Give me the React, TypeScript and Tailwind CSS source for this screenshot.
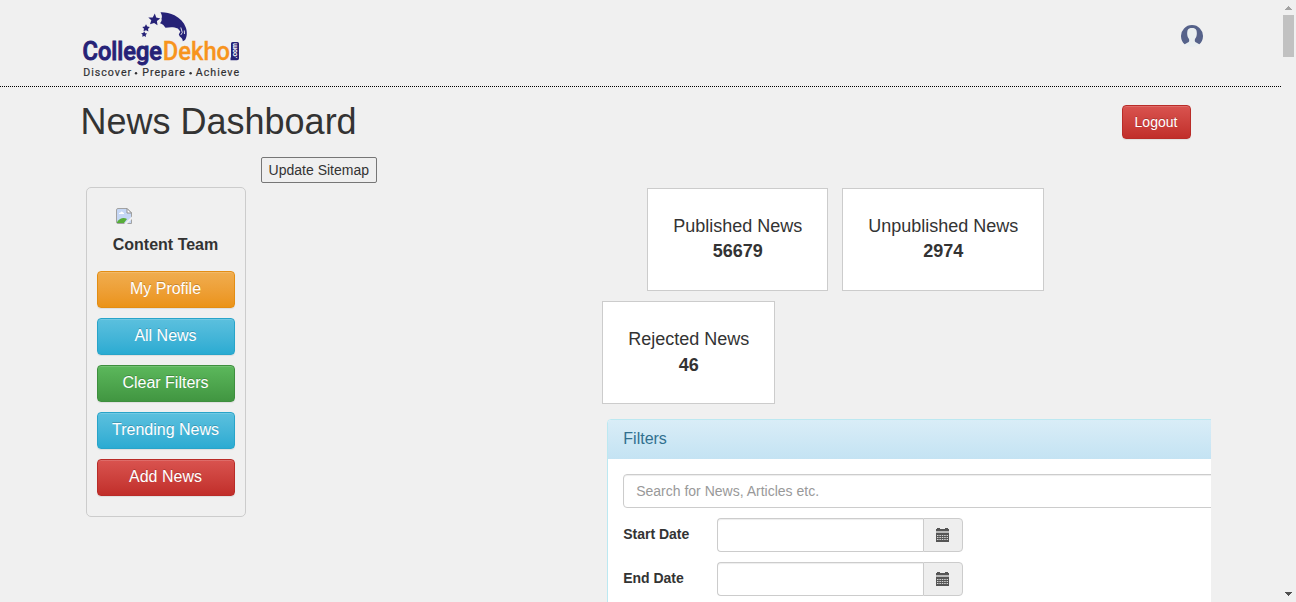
import React from 'react';

function Logo() {
  return (
    <svg width="160" height="72" viewBox="82 8 160 72" role="img" aria-label="CollegeDekho.com">
      <g fill="#262277">
        <path d="M160.500 12.300 C164 12 170 13 174.500 15.300 C180 18.200 184 22.500 185.800 27.500 C187.300 31.500 187.200 37 185 40 L182.800 41.300 C182.800 39 181.500 37.800 179.800 36.500 L178.800 34.500 L180.300 31.500 L177.800 28.500 C174 26.800 170 27 165.500 27.800 C164.300 26 162.800 24 160 23.300 C161.500 21.500 162 20.500 161.500 18.500 C162.500 16.500 161.500 14 160.500 12.300 Z" />
        <path d="M154.800 13.600 L156.200 17.500 L160.300 18.400 L156.900 21 L157.500 25.200 L154.100 22.900 L150 24.300 L151.300 20.300 L148.300 17.500 L152.700 17.400 Z" />
        <path d="M146 24.300 L147.300 26.600 L149.800 27 L148 28.900 L148.400 31.500 L146 30.300 L143.500 31.300 L144 28.800 L142.300 26.900 L144.800 26.600 Z" />
        <path d="M144.200 31.300 L145.200 33.300 L147.100 33.600 L145.700 35.100 L146 37 L144.200 36.100 L142.200 36.800 L142.600 34.800 L141.100 33.300 L143.200 33 Z" />
      </g>
      <path d="M180.800 27.500 L182.300 32.500 L180.800 35 M184.300 30.500 L184.500 34" stroke="#f0f0f0" strokeWidth="0.900" fill="none" />
      <text x="82.500" y="59.800" fontFamily="Roboto, sans-serif" fontWeight="500" fontSize="25.500" fill="#262277" stroke="#262277" strokeWidth="0.900" textLength="79.500" lengthAdjust="spacingAndGlyphs">College</text>
      <text x="162.800" y="59.800" fontFamily="Roboto, sans-serif" fontWeight="500" fontSize="25.500" fill="#f7941d" stroke="#f7941d" strokeWidth="0.300" textLength="67.300" lengthAdjust="spacingAndGlyphs">Dekho</text>
      <path d="M232.500 42 H237.500 Q239 42 239 43.500 V58.500 Q239 60.300 237 60.300 H230.500 V57.500 H231 V43.500 Q231 42 232.500 42 Z" fill="#262277" />
      <text transform="translate(237.300 58.500) rotate(-90)" fontFamily="Roboto, sans-serif" fontWeight="700" fontSize="7.500" fill="#fff" textLength="15.500" lengthAdjust="spacingAndGlyphs">.com</text>
      <g fontFamily="Roboto, sans-serif" fontWeight="400" fontSize="10.600" fill="#303033" stroke="#303033" strokeWidth="0.200">
        <text x="83.300" y="76" textLength="47.800" lengthAdjust="spacing">Discover</text>
        <text x="142.300" y="76" textLength="42.500" lengthAdjust="spacing">Prepare</text>
        <text x="195.800" y="76" textLength="43.200" lengthAdjust="spacing">Achieve</text>
      </g>
      <circle cx="136" cy="73.300" r="1.200" fill="#303033" />
      <circle cx="190.600" cy="73.300" r="1.200" fill="#303033" />
    </svg>
  );
}

function Avatar() {
  return (
    <svg width="22" height="22" viewBox="0 0 22 22" aria-label="Account">
      <circle cx="11" cy="11" r="11" fill="#e9eef0" />
      <path d="M3.700 19.300 A11 11 0 1 1 18.300 19.300 L14.300 17 C13.600 16.200 13.700 15 14 14 C15.800 12.200 16.200 8.500 15.500 5.500 C14.800 3.200 13 2.900 11 2.900 C9 2.900 7.200 3.200 6.500 5.500 C5.800 8.500 6.200 12.200 8 14 C8.300 15 8.400 16.200 7.700 17 Z" fill="#56628a" />
    </svg>
  );
}

function BrokenImage() {
  return (
    <svg width="16" height="16" viewBox="0 0 16 16" aria-hidden="true">
      <path d="M0.500 2 Q0.500 0.500 2 0.500 H11 L15.500 5 V15.500 H2 Q0.500 15.500 0.500 14 Z" fill="#c5d7f5" stroke="#a2a2a2" />
      <path d="M3 6 Q2.500 4.500 4.500 4.500 Q5.500 2.500 7 4.500 Q8.500 4.500 8 6 Z" fill="#fff" />
      <path d="M1 15 V14 C4 9.500 8 9 11 11 L8 15 Z" fill="#57ad38" />
      <path d="M8 16 L16 8.500 V11 L11 16 Z" fill="#f0f0f0" />
      <path d="M11 0.500 V5 H15.500 Z" fill="#fff" stroke="#929292" />
    </svg>
  );
}

function CalendarIcon() {
  return (
    <svg width="13" height="14" viewBox="0 0 13 14" shapeRendering="crispEdges" aria-hidden="true">
      <path d="M0 1 H1 V0 H4 V1 H9 V0 H12 V1 H13 V3 H0 Z" fill="#555" />
      <path d="M0 3 H13 V5 H0 Z" fill="#b9b9b9" />
      <path d="M0 5 H13 V14 H0 Z" fill="#555" />
      <path d="M1 7.500 H12 M1 9.500 H12 M1 11.500 H12" stroke="#d6d6d6" strokeWidth="1.200" strokeDasharray="1.500 0.900" shapeRendering="auto" />
    </svg>
  );
}

const buttonColors = {
  orange: 'border-[#e38d13] from-[#f0ad4e] to-[#eb9316]',
  blue: 'border-[#28a4c9] from-[#5bc0de] to-[#2aabd2]',
  green: 'border-[#3e8f3e] from-[#5cb85c] to-[#419641]',
  red: 'border-[#b92c28] from-[#d9534f] to-[#c12e2a]',
};

const buttonBase =
  'block rounded border bg-linear-to-b text-center text-white [text-shadow:0_-1px_0_rgba(0,0,0,.2)] shadow-[inset_0_1px_0_rgba(255,255,255,.15),0_1px_1px_rgba(0,0,0,.075)]';

const menu: { label: string; color: keyof typeof buttonColors }[] = [
  { label: 'My Profile', color: 'orange' },
  { label: 'All News', color: 'blue' },
  { label: 'Clear Filters', color: 'green' },
  { label: 'Trending News', color: 'blue' },
  { label: 'Add News', color: 'red' },
];

function Sidebar() {
  return (
    <aside className="h-[330px] w-40 shrink-0 rounded-[5px] border border-[#ccc] px-2.5">
      <div className="pt-5 pl-[19px]">
        <BrokenImage />
      </div>
      <div className="mt-[11px] pr-px text-center text-base leading-5 font-bold">Content Team</div>
      <nav className="mt-4 flex flex-col gap-2.5">
        {menu.map((item) => (
          <button key={item.label} className={`${buttonBase} ${buttonColors[item.color]} h-[37px] pr-px pb-0.5 text-base leading-[34px]`}>
            {item.label}
          </button>
        ))}
      </nav>
    </aside>
  );
}

function Stat({ label, value, size }: { label: string; value: string; size: string }) {
  return (
    <div className={`${size} h-[103px] border border-[#ccc] bg-white pl-[0.500px] text-center text-lg`}>
      <div>{label}</div>
      <div className="font-bold">{value}</div>
    </div>
  );
}

function DateField({ label }: { label: string }) {
  return (
    <div className="flex h-[34px]">
      <label className="w-[94px] shrink-0 pl-[0.150px] text-sm leading-8 font-bold">{label}</label>
      <input
        aria-label={label}
        className="w-[206px] rounded-l border border-r-0 border-[#ccc] bg-white shadow-[inset_0_1px_1px_rgba(0,0,0,.075)]"
      />
      <span className="flex w-10 items-center justify-center rounded-r border border-[#ccc] bg-[#eee] pr-px">
        <CalendarIcon />
      </span>
    </div>
  );
}

function Filters() {
  return (
    <section className="mt-[15px] ml-[5px] h-[183px] w-[604px] overflow-hidden">
      <div className="h-[300px] w-[760px] overflow-hidden rounded border border-[#bce8f1] bg-white">
        <h3 className="h-[39px] bg-linear-to-b from-[#d9edf7] to-[#c4e3f3] pl-[15.300px] text-base leading-[37px] text-[#31708f]">
          Filters
        </h3>
        <div className="flex flex-col gap-2.5 px-[15px] pt-[15px]">
          <input
            placeholder="Search for News, Articles etc."
            className="h-[34px] w-full rounded border border-[#ccc] bg-white px-[12.200px] text-sm shadow-[inset_0_1px_1px_rgba(0,0,0,.075)] placeholder:text-[#999]"
          />
          <DateField label="Start Date" />
          <DateField label="End Date" />
        </div>
      </div>
    </section>
  );
}

function Scrollbar() {
  return (
    <div className="flex w-[15px] shrink-0 flex-col items-center justify-between" aria-hidden="true">
      <div className="flex flex-col items-center">
        <svg width="15" height="15" viewBox="0 0 15 15" shapeRendering="crispEdges">
          <path d="M4 10 V9 H5 V8 H6 V7 H7 V6 H8 V7 H9 V8 H10 V9 H11 V10 Z" fill="#a3a3a3" />
        </svg>
        <div className="h-[42px] w-[11px] bg-[#c1c1c1]" />
      </div>
      <svg width="15" height="15" viewBox="0 0 15 15" shapeRendering="crispEdges">
        <path d="M4 5 H11 V6 H10 V7 H9 V8 H8 V9 H7 V8 H6 V7 H5 V6 H4 Z" fill="#505050" />
      </svg>
    </div>
  );
}

export default function App() {
  return (
    <div className="flex h-[602px] w-[1296px] overflow-hidden bg-[#f0f0f0] font-['Liberation_Sans',Arial,sans-serif] text-[#333]">
      <div className="w-[1281px] shrink-0">
        <header className="flex h-[87px] items-start justify-between border-b border-dotted border-black pt-2 pr-[78px] pl-[82px]">
          <Logo />
          <div className="pt-[17px]">
            <Avatar />
          </div>
        </header>
        <div className="flex h-[52px] items-start justify-between pt-[18px] pr-[90px] pl-[80.500px]">
          <h1 className="text-4xl leading-[34px]">News Dashboard</h1>
          <button className={`${buttonBase} ${buttonColors.red} h-[34px] w-[69px] pr-px text-sm`}>Logout</button>
        </div>
        <div className="pt-[18px] pl-[261px]">
          <button className="block h-[26px] w-[116px] rounded-[2px] border border-[#767676] bg-[#efefef] pr-[0.400px] text-sm leading-6">
            Update Sitemap
          </button>
        </div>
        <div className="flex gap-[356px] pt-1 pl-[86px]">
          <Sidebar />
          <main className="pt-px">
            <div className="flex gap-3.5 pl-[45px]">
              <Stat label="Published News" value="56679" size="w-[181px] pt-[25px] leading-[25px]" />
              <Stat label="Unpublished News" value="2974" size="w-[202px] pt-[25px] leading-[25px]" />
            </div>
            <div className="flex pt-2.5">
              <Stat label="Rejected News" value="46" size="w-[173px] pt-6 leading-[26px]" />
            </div>
            <Filters />
          </main>
        </div>
      </div>
      <Scrollbar />
    </div>
  );
}
